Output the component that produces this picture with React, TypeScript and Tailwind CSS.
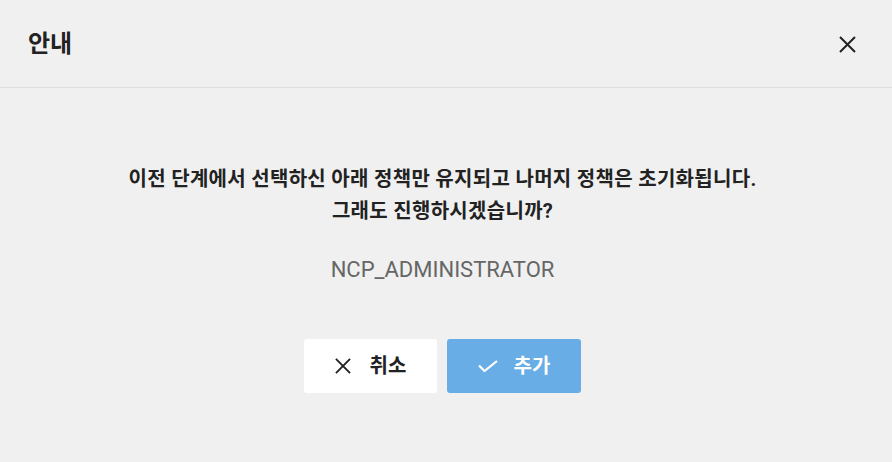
const font = { fontFamily: 'Roboto, "Noto Sans CJK KR", sans-serif' }

function XIcon({ size = 17, className = '' }: { size?: number; className?: string }) {
  return (
    <svg width={size} height={size} viewBox="0 0 17 17" className={className} fill="none" stroke="currentColor" strokeWidth={2}>
      <path d="M1 1L16 16M16 1L1 16" />
    </svg>
  )
}

function CheckIcon() {
  return (
    <svg width={20} height={12} viewBox="0 0 20 12" fill="none" stroke="currentColor" strokeWidth={2.2}>
      <path d="M1 5.5L6.5 11L19 1" />
    </svg>
  )
}

export default function App() {
  return (
    <div style={font} className="w-[892px] h-[462px] bg-[#f0f0f0] flex flex-col text-[#222]">
      {/* Header */}
      <div className="h-[88px] flex-shrink-0 flex items-center justify-between pl-[28px] pr-[36px] border-b border-[#dddddd]">
        <h1 className="text-[24px] font-bold leading-none">안내</h1>
        <button className="text-[#222] mt-[2px]">
          <XIcon />
        </button>
      </div>

      {/* Body */}
      <div className="flex flex-col items-center pt-[75px] pr-[7px]">
        <p className="text-[20px] tracking-[0.3px] font-bold leading-[32px] text-center text-[#222]">
          이전 단계에서 선택하신 아래 정책만 유지되고 나머지 정책은 초기화됩니다.
          <br />
          그래도 진행하시겠습니까?
        </p>
        <p className="mt-[32px] text-[22px] leading-none text-[#666]">NCP_ADMINISTRATOR</p>

        <div className="mt-[58px] flex gap-[10px]">
          <button className="w-[133px] h-[54px] rounded-[3px] bg-white flex items-center justify-center gap-[19px] text-[#222]">
            <XIcon size={16} />
            <span className="text-[20px] font-bold">취소</span>
          </button>
          <button className="w-[134px] h-[54px] rounded-[3px] bg-[#68ade6] flex items-center justify-center gap-[16px] text-white">
            <CheckIcon />
            <span className="text-[20px] font-bold">추가</span>
          </button>
        </div>
      </div>
    </div>
  )
}
